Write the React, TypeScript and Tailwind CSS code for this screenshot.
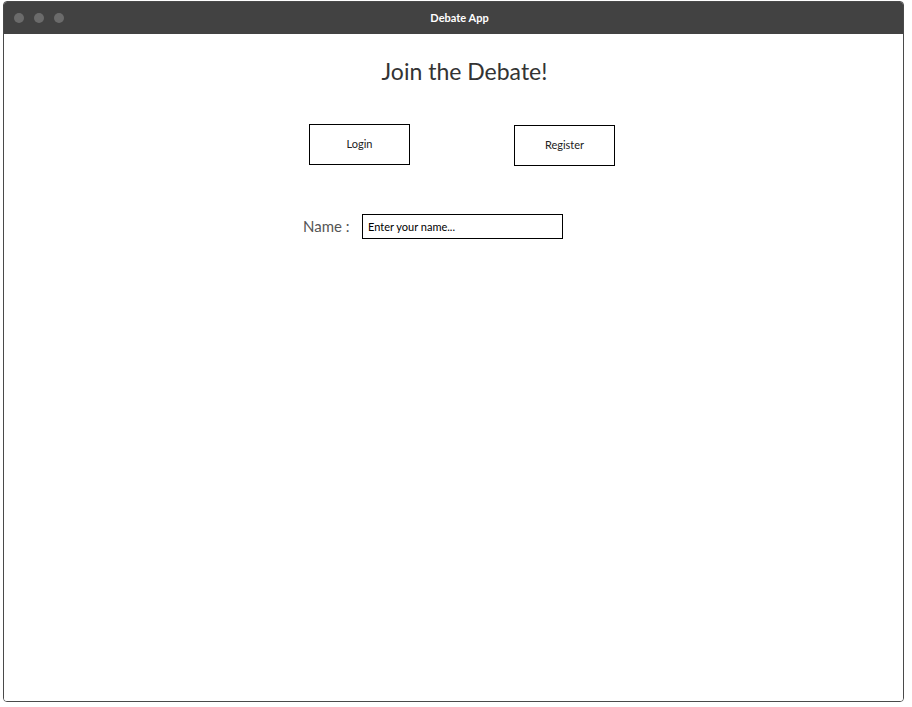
import React from 'react';

const font = { fontFamily: 'Lato, "Open Sans", sans-serif' };

export default function App() {
  return (
    <div className="w-[912px] h-[707px] bg-white" style={font}>
      <div className="ml-[3px] mt-[1px] w-[901px] h-[701px] border border-[#4a4a4a] rounded-[4px] overflow-hidden flex flex-col">
        {/* title bar */}
        <div className="relative h-[32px] bg-[#424242] flex items-center shrink-0">
          <div className="flex gap-[10px] pl-[10px]">
            <span className="w-[10px] h-[10px] rounded-full bg-[#6b6b6b]" />
            <span className="w-[10px] h-[10px] rounded-full bg-[#6b6b6b]" />
            <span className="w-[10px] h-[10px] rounded-full bg-[#6b6b6b]" />
          </div>
          <div className="absolute inset-0 flex items-center justify-center pl-[12px] text-white text-[11px] font-bold">
            Debate App
          </div>
        </div>

        {/* content */}
        <div className="flex-1 bg-white">
          <h1 className="mt-[23px] pl-[22px] text-center text-[23px] leading-[28px] text-[#333]">
            Join the Debate!
          </h1>

          <div className="mt-[39px] ml-[305px] flex items-start gap-[104px]">
            <button className="w-[101px] h-[41px] border border-black bg-white text-[11px] text-[#222]">
              Login
            </button>
            <button className="mt-[1px] w-[101px] h-[41px] border border-black bg-white text-[11px] text-[#222]">
              Register
            </button>
          </div>

          <div className="mt-[48px] ml-[299px] flex items-center">
            <label className="text-[15px] text-[#555] w-[59px]">Name :</label>
            <input
              className="w-[201px] h-[25px] border border-black px-[5px] text-[11px] text-black placeholder:text-black outline-none"
              placeholder="Enter your name..."
            />
          </div>
        </div>
      </div>
    </div>
  );
}
